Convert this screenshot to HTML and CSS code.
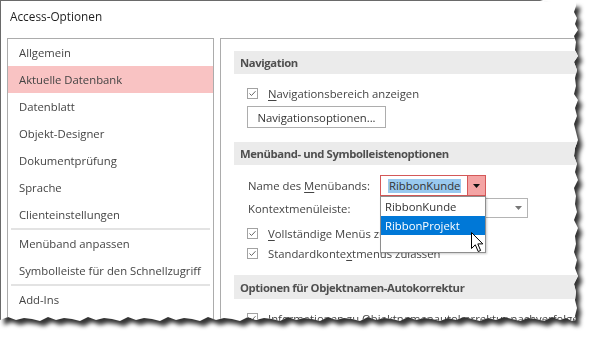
FILE: index.html
```html
<!DOCTYPE html>
<html lang="de">
<head>
<meta charset="utf-8">
<title>Access-Optionen</title>
<link rel="stylesheet" href="styles.css">
</head>
<body>
<div class="frame">
  <div class="shot">
    <div class="titlebar">Access-Optionen</div>
    <div class="body">
      <nav class="list">
        <div class="item">Allgemein</div>
        <div class="item active">Aktuelle Datenbank</div>
        <div class="item">Datenblatt</div>
        <div class="item">Objekt-Designer</div>
        <div class="item">Dokumentprüfung</div>
        <div class="item">Sprache</div>
        <div class="item">Clienteinstellungen</div>
        <div class="sep"></div>
        <div class="item">Menüband anpassen</div>
        <div class="item">Symbolleiste für den Schnellzugriff</div>
        <div class="sep"></div>
        <div class="item">Add-Ins</div>
      </nav>
      <main class="panel">
        <div class="sect-h">Navigation</div>
        <div class="row chk r-nav">
          <span class="cb"><svg width="11" height="11" viewBox="0 0 11 11"><rect x="0.5" y="0.5" width="10" height="10" fill="#fff" stroke="#a2a2a2"/><path d="M2.5 5.5 L4.5 7.5 L8.5 3.2" fill="none" stroke="#666" stroke-width="1"/></svg></span>
          <span class="txt"><u>N</u>avigationsbereich anzeigen</span>
        </div>
        <div class="row btn-row"><span class="btn">Navigationsoptionen...</span></div>

        <div class="sect-h s2">Menüband- und Symbolleistenoptionen</div>
        <div class="row field r-name">
          <span class="lbl">Name des <u>M</u>enübands:</span>
          <div class="combo red">
            <span class="val"><span class="sel">RibbonKunde</span></span>
            <span class="drop red-drop"><svg width="7" height="4" viewBox="0 0 7 4"><path d="M0 0 H7 L3.5 4 Z" fill="#111"/></svg></span>
            <div class="dlist">
              <div class="ditem">RibbonKunde</div>
              <div class="ditem hl">RibbonProjekt</div>
              <svg class="cursor" width="13" height="21" viewBox="0 0 13 21"><path d="M0.5 0.5 V16.5 L4.3 12.8 L7.2 19.5 L9.6 18.5 L6.8 11.9 L11.8 11.9 Z" fill="#fff" stroke="#000" stroke-width="1" stroke-linejoin="miter"/></svg>
            </div>
          </div>
        </div>
        <div class="row field r-ctx">
          <span class="lbl">Kontextmenüleiste:</span>
          <div class="combo gray">
            <span class="val"></span>
            <span class="drop"><svg width="7" height="4" viewBox="0 0 7 4"><path d="M0 0 H7 L3.5 4 Z" fill="#777"/></svg></span>
          </div>
        </div>
        <div class="row chk r-full">
          <span class="cb"><svg width="11" height="11" viewBox="0 0 11 11"><rect x="0.5" y="0.5" width="10" height="10" fill="#fff" stroke="#a2a2a2"/><path d="M2.5 5.5 L4.5 7.5 L8.5 3.2" fill="none" stroke="#666" stroke-width="1"/></svg></span>
          <span class="txt"><u>V</u>ollständige Menüs zulassen</span>
        </div>
        <div class="row chk">
          <span class="cb"><svg width="11" height="11" viewBox="0 0 11 11"><rect x="0.5" y="0.5" width="10" height="10" fill="#fff" stroke="#a2a2a2"/><path d="M2.5 5.5 L4.5 7.5 L8.5 3.2" fill="none" stroke="#666" stroke-width="1"/></svg></span>
          <span class="txt">Standardkonte<u>x</u>tmenüs zulassen</span>
        </div>

        <div class="sect-h s3">Optionen für Objektnamen-Autokorrektur</div>
        <div class="row chk r-info">
          <span class="cb"><svg width="11" height="11" viewBox="0 0 11 11"><rect x="0.5" y="0.5" width="10" height="10" fill="#fff" stroke="#a2a2a2"/><path d="M2.5 5.5 L4.5 7.5 L8.5 3.2" fill="none" stroke="#666" stroke-width="1"/></svg></span>
          <span class="txt">Informationen zu Objektnamenautokorrektur nachverfolgen</span>
        </div>
      </main>
    </div>
  </div>
</div>
</body>
</html>
```

FILE: styles.css
```css
html, body {
  margin: 0;
  padding: 0;
  background: #fff;
}
body {
  font-family: "Open Sans", "Noto Sans", sans-serif;
  font-size: 11.3px;
  color: #444;
}
.frame {
  width: 593px;
  height: 338px;
  filter: drop-shadow(4px 5px 2px rgba(0, 0, 0, 0.8));
}
.shot {
  width: 582px;
  height: 324px;
  box-sizing: border-box;
  background: #fff;
  border-left: 1px solid #6a6a6a;
  border-top: 1px solid #6a6a6a;
  overflow: hidden;
  clip-path: polygon(0 0, 540px 0, 546px 2px, 576px 2px, 576px 6px, 574px 12px, 577px 18px, 575px 24px, 578px 30px, 574px 36px, 576px 42px, 575px 50px, 578px 56px, 574px 62px, 577px 70px, 575px 78px, 576px 86px, 574px 94px, 578px 100px, 575px 108px, 577px 116px, 574px 124px, 576px 132px, 578px 140px, 575px 148px, 574px 156px, 577px 164px, 575px 172px, 578px 180px, 574px 188px, 576px 196px, 575px 204px, 577px 212px, 574px 220px, 578px 228px, 575px 236px, 576px 244px, 574px 252px, 577px 260px, 575px 268px, 578px 276px, 574px 284px, 576px 292px, 575px 300px, 577px 308px, 575px 316px, 576px 320px, 572px 321px, 566px 318px, 560px 320px, 552px 317px, 544px 321px, 536px 319px, 528px 318px, 520px 321px, 512px 319px, 504px 317px, 496px 320px, 488px 318px, 480px 321px, 472px 319px, 464px 317px, 456px 320px, 448px 318px, 440px 321px, 432px 319px, 424px 318px, 416px 320px, 408px 317px, 400px 321px, 392px 319px, 384px 318px, 376px 320px, 368px 317px, 360px 321px, 352px 319px, 344px 318px, 336px 320px, 328px 317px, 320px 321px, 312px 319px, 304px 318px, 296px 320px, 288px 317px, 280px 321px, 272px 319px, 264px 318px, 256px 320px, 248px 317px, 240px 321px, 232px 319px, 224px 318px, 216px 320px, 208px 317px, 200px 321px, 192px 319px, 184px 318px, 176px 320px, 168px 317px, 160px 321px, 152px 319px, 144px 318px, 136px 320px, 128px 317px, 120px 321px, 112px 319px, 104px 318px, 96px 320px, 88px 317px, 80px 321px, 72px 319px, 64px 318px, 56px 320px, 48px 317px, 40px 321px, 32px 319px, 24px 318px, 16px 320px, 8px 317px, 0 320px);
}
.titlebar {
  height: 37px;
  line-height: 31px;
  padding-left: 9px;
  color: #1e1e1e;
  font-size: 11.8px;
}
.body {
  display: flex;
  gap: 6px;
  padding-left: 6px;
  align-items: flex-start;
}
.list {
  width: 205px;
  height: 300px;
  border: 1px solid #acacac;
  flex: none;
}
.item {
  height: 27px;
  display: flex;
  align-items: center;
  padding-left: 11px;
  color: #444;
  white-space: nowrap;
}
.item.active {
  background: #f9c3c3;
}
.sep {
  height: 2px;
  margin: 0 3px;
  background: #e3e3e3;
}
.panel {
  flex: 1;
  height: 300px;
  border-left: 1px solid #acacac;
  border-top: 1px solid #acacac;
  padding: 12px 0 0 13px;
  position: relative;
}
.sect-h {
  height: 23px;
  background: #ebebeb;
  padding-left: 6px;
  display: flex;
  align-items: center;
  font-weight: bold;
  letter-spacing: -0.4px;
  color: #4f4f4f;
  white-space: nowrap;
}
.s2 { margin-top: 14px; }
.s3 { margin-top: 12px; height: 24px; }
.row {
  display: flex;
  align-items: center;
  white-space: nowrap;
}
.chk {
  height: 20px;
  padding-left: 13px;
}
.cb {
  width: 11px;
  height: 11px;
  display: flex;
  margin-right: 10px;
}
.txt { color: #444; }
u {
  text-decoration-thickness: 1px;
  text-underline-offset: 2px;
}
.r-nav { margin-top: 9px; }
.btn-row {
  margin-top: 3px;
  padding-left: 13px;
}
.btn {
  width: 139px;
  height: 22px;
  box-sizing: border-box;
  border: 1px solid #adadad;
  background: #fff;
  display: flex;
  align-items: center;
  justify-content: center;
  color: #333;
}
.field {
  padding-left: 14px;
}
.lbl {
  width: 132px;
  color: #444;
}
.r-name { margin-top: 10px; height: 21px; }
.r-ctx { margin-top: 2px; height: 20px; }
.r-full { margin-top: 5px; }
.r-info { margin-top: 9px; }
.combo {
  position: relative;
  display: flex;
  box-sizing: border-box;
  background: #fff;
}
.combo.red {
  width: 106px;
  height: 21px;
  border: 1px solid #d45858;
}
.combo.gray {
  width: 148px;
  height: 20px;
  border: 1px solid #b4b4b4;
}
.val {
  flex: 1;
  display: flex;
  align-items: center;
  padding-left: 7px;
}
.sel {
  background: #99c9ef;
  color: #333;
  line-height: 14px;
  padding: 0 1px;
}
.drop {
  width: 17px;
  display: flex;
  align-items: center;
  justify-content: center;
}
.red-drop {
  background: #f4a4a4;
  border-left: 1px solid #d45858;
}
.dlist {
  position: absolute;
  left: -1px;
  top: 20px;
  width: 106px;
  height: 57px;
  box-sizing: border-box;
  border: 1px solid #8e8e8e;
  background: #fff;
  box-shadow: 1px 1px 2px rgba(0, 0, 0, 0.2);
  z-index: 5;
}
.ditem {
  height: 19px;
  display: flex;
  align-items: center;
  padding-left: 4px;
  color: #333;
}
.ditem.hl {
  background: #0078d7;
  color: #fff;
}
.cursor {
  position: absolute;
  left: 90px;
  top: 35px;
}
```
